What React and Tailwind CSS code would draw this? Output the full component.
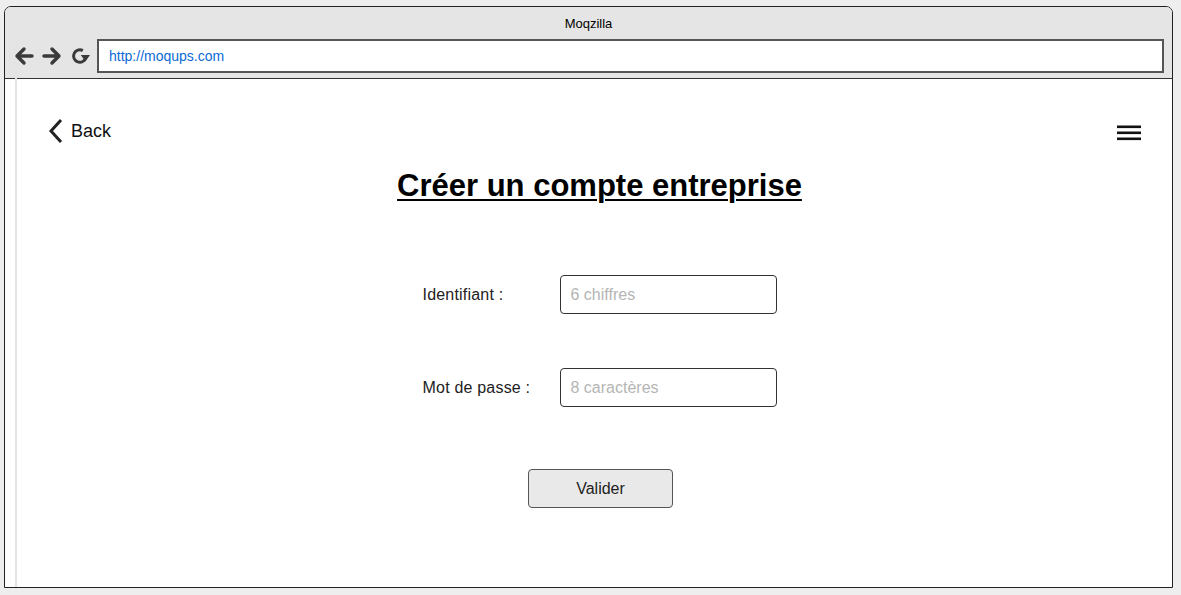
export default function App() {
  const font = { fontFamily: '"Liberation Sans", Arial, sans-serif' };
  return (
    <div className="w-[1181px] h-[595px] bg-[#eeeeee] pt-[6px] pl-[4px]" style={font}>
      <div className="relative w-[1169px] h-[582px] border border-[#222] rounded-t-[7px] bg-white flex flex-col overflow-hidden">
        <div className="absolute left-[10px] top-0 bottom-0 w-[2px] bg-[#e4e4e4]" />
        <div className="h-[72px] bg-[#e5e5e5] border-b border-[#333] flex flex-col shrink-0">
          <div className="h-[32px] flex items-center justify-center text-[13px] text-black pt-[1px]">Moqzilla</div>
          <div className="flex items-center pl-[9px] pr-[8px] gap-[8px] relative">
            <svg width="20" height="20" viewBox="0 0 20 20" className="shrink-0">
              <path d="M18 10H3M10 3L3 10l7 7" fill="none" stroke="#3a3a3a" strokeWidth="3.4" strokeLinecap="round" strokeLinejoin="round" />
            </svg>
            <svg width="20" height="20" viewBox="0 0 20 20" className="shrink-0">
              <path d="M2 10h15M10 3l7 7-7 7" fill="none" stroke="#3a3a3a" strokeWidth="3.4" strokeLinecap="round" strokeLinejoin="round" />
            </svg>
            <svg width="20" height="20" viewBox="0 0 20 20" className="shrink-0">
              <path d="M15.8 11.5 A6.2 6.2 0 1 1 12.8 4.6" fill="none" stroke="#3a3a3a" strokeWidth="3" />
              <path d="M10.8 9 L20 9 L15.4 15.5 Z" fill="#3a3a3a" />
            </svg>
            <div className="flex-1 h-[34px] bg-white border-2 border-[#555] flex items-center pl-[10px] text-[14px] text-[#0b6bd6] ml-[-1px]">
              http://moqups.com
            </div>
          </div>
        </div>
        <div className="flex-1 flex flex-col">
          <div className="flex items-center justify-between pl-[42px] pr-[31px] pt-[40px] h-[64px]">
            <div className="flex items-center gap-[6px]">
              <svg width="18" height="26" viewBox="0 0 18 26">
                <path d="M14 2L4 13l10 11" fill="none" stroke="#222" strokeWidth="3" strokeLinecap="butt" strokeLinejoin="miter" />
              </svg>
              <span className="text-[18px] text-[#111]">Back</span>
            </div>
            <svg width="24" height="16" viewBox="0 0 24 16" className="mt-[4px]">
              <rect x="0" y="0.5" width="24" height="2.6" fill="#111" />
              <rect x="0" y="6.5" width="24" height="2.6" fill="#111" />
              <rect x="0" y="12.5" width="24" height="2.6" fill="#111" />
            </svg>
          </div>
          <div className="flex flex-col items-center pl-[22px]">
            <h1 className="mt-[27px] h-[32px] leading-[32px] text-[31px] font-bold underline underline-offset-[3px] decoration-[2px] text-black">
              Créer un compte entreprise
            </h1>
            <div className="mt-[73px] flex items-center">
              <div className="w-[137px] text-[16px] text-[#222] tracking-[0.2px]">Identifiant :</div>
              <div className="w-[217px] h-[39px] border border-[#333] rounded-[4px] flex items-center pl-[10px] text-[16px] text-[#b5b5b5]">6 chiffres</div>
            </div>
            <div className="mt-[54px] flex items-center">
              <div className="w-[137px] text-[16px] text-[#222] tracking-[0.2px]">Mot de passe :</div>
              <div className="w-[217px] h-[39px] border border-[#333] rounded-[4px] flex items-center pl-[10px] text-[16px] text-[#b5b5b5]">8 caractères</div>
            </div>
            <div className="mt-[62px] ml-[2px] w-[145px] h-[39px] bg-[#e9e9e9] border border-[#555] rounded-[4px] flex items-center justify-center text-[16px] text-[#222]">
              Valider
            </div>
          </div>
        </div>
      </div>
    </div>
  );
}
